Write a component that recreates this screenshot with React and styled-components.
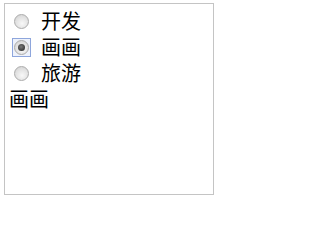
import React, { useState } from 'react';
import styled, { createGlobalStyle } from 'styled-components';

const GlobalStyle = createGlobalStyle`
  html, body {
    margin: 0;
    padding: 0;
    background: #ffffff;
  }
  body {
    font-family: "Noto Sans CJK SC", "Noto Sans", sans-serif;
    color: #000000;
  }
`;

const options = ['开发', '画画', '旅游'];

const App = () => {
  const [picked, setPicked] = useState('画画');
  return (
    <>
      <GlobalStyle />
      <Frame>
        {options.map((opt) => (
          <Option key={opt} onClick={() => setPicked(opt)}>
            <Focus focused={picked === opt}>
              <Dot checked={picked === opt} />
            </Focus>
            <Label>{opt}</Label>
          </Option>
        ))}
        <Result>{picked}</Result>
      </Frame>
    </>
  );
};

const Frame = styled.div`
  margin: 3px 0 0 4px;
  width: 208px;
  height: 186px;
  border: 1px solid #c4c4c4;
  padding-top: 4px;
  box-sizing: content-box;
  display: flex;
  flex-direction: column;
`;

const Option = styled.label`
  display: flex;
  align-items: center;
  height: 26px;
  cursor: default;
`;

const Focus = styled.span`
  display: flex;
  align-items: center;
  justify-content: center;
  width: 17px;
  height: 17px;
  margin-left: 7px;
  border: 1px solid ${(p) => (p.focused ? '#8ea6dc' : 'transparent')};
  background: ${(p) => (p.focused ? '#eef2fb' : 'transparent')};
`;

const Dot = styled.span`
  position: relative;
  width: 13px;
  height: 13px;
  border-radius: 50%;
  border: 1px solid #ababab;
  background: radial-gradient(circle at 55% 65%, #f8f8f8 0%, #e2e2e2 55%, #cdcdcd 100%);
  &::after {
    content: '';
    display: ${(p) => (p.checked ? 'block' : 'none')};
    position: absolute;
    left: 3px;
    top: 3px;
    width: 7px;
    height: 7px;
    border-radius: 50%;
    background: radial-gradient(circle at 45% 40%, #7a7a7a 0%, #3c3c3c 70%, #2a2a2a 100%);
  }
`;

const Label = styled.span`
  margin-left: 10px;
  font-size: 20px;
  line-height: 24px;
`;

const Result = styled.div`
  margin-top: 1px;
  padding-left: 4px;
  font-size: 20px;
  line-height: 24px;
`;

export default App;
